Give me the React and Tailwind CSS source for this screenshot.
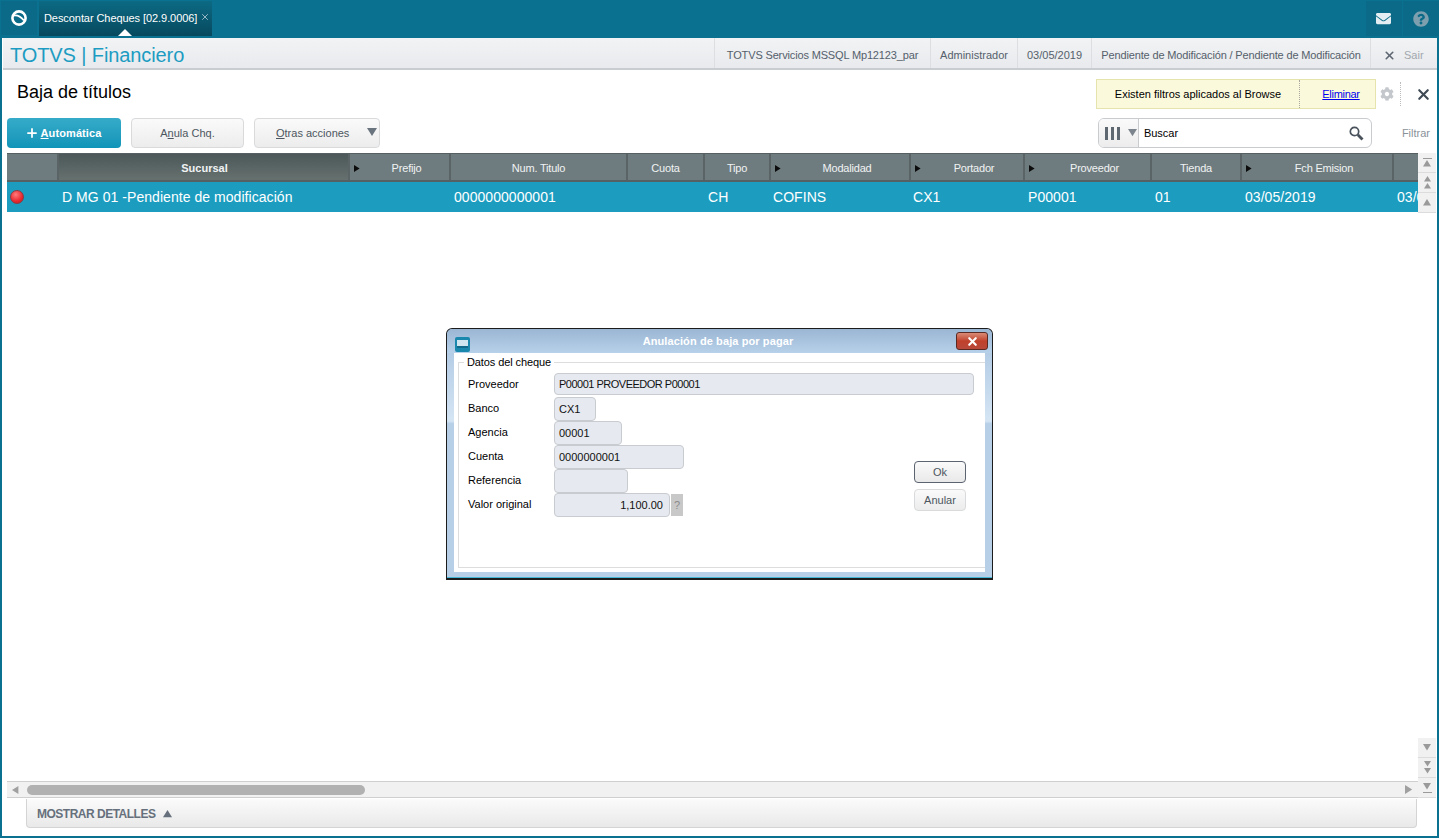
import { FaEnvelope, FaQuestionCircle, FaCog } from 'react-icons/fa'
import { X, Plus } from 'lucide-react'

const font = { fontFamily: '"Liberation Sans", Arial, sans-serif' }

const columns = [
  { label: '', w: 'w-[52px]' },
  { label: 'Sucursal', w: 'w-[291px]', active: true },
  { label: 'Prefijo', w: 'w-[101px]', arrow: true },
  { label: 'Num. Titulo', w: 'w-[177px]' },
  { label: 'Cuota', w: 'w-[77px]' },
  { label: 'Tipo', w: 'w-[66px]' },
  { label: 'Modalidad', w: 'w-[140px]', arrow: true },
  { label: 'Portador', w: 'w-[114px]', arrow: true },
  { label: 'Proveedor', w: 'w-[127px]', arrow: true },
  { label: 'Tienda', w: 'w-[90px]' },
  { label: 'Fch Emision', w: 'w-[152px]', arrow: true },
  { label: '', w: 'flex-1' },
]

const cells = [
  { w: 'w-[392px]', text: 'D MG 01 -Pendiente de modificación' },
  { w: 'w-[254px]', text: '0000000000001' },
  { w: 'w-[65px]', text: 'CH' },
  { w: 'w-[140px]', text: 'COFINS' },
  { w: 'w-[115px]', text: 'CX1' },
  { w: 'w-[127px]', text: 'P00001' },
  { w: 'w-[90px]', text: '01' },
  { w: 'w-[152px]', text: '03/05/2019' },
]

function Tri({ dir = 'up', size = 9, color = '#9a9a9a' }) {
  const pts = { up: '0,8 5,0 10,8', down: '0,0 10,0 5,8', left: '8,0 8,10 0,5', right: '0,0 8,5 0,10' }
  return (
    <svg width={size} height={size} viewBox="0 0 10 10" className="block">
      <polygon points={pts[dir]} fill={color} />
    </svg>
  )
}

function ScrollBtn({ children }) {
  return (
    <div className="h-[20px] w-[18px] shrink-0 flex flex-col items-center justify-center bg-[#f1f1f1] border-b border-[#dcdcdc]">
      {children}
    </div>
  )
}

function Logo() {
  return (
    <svg width="18" height="18" viewBox="0 0 18 18">
      <circle cx="9" cy="9" r="6.6" fill="none" stroke="#fff" strokeWidth="2.6" />
      <path d="M4 6.5 C7 6 11 8 14 11.5" fill="none" stroke="#fff" strokeWidth="1.8" />
    </svg>
  )
}

function SearchIcon() {
  return (
    <svg width="15" height="15" viewBox="0 0 15 15" className="self-center mr-[7px]">
      <circle cx="5.5" cy="5.5" r="4.2" fill="none" stroke="#4a535c" strokeWidth="1.7" />
      <path d="M8.8 8.8 L13.5 13.5" stroke="#4a535c" strokeWidth="2.8" />
    </svg>
  )
}

function Field({ label, value, w, right, extra }) {
  return (
    <div className="flex items-center h-6">
      <span className="w-[86px] pb-px text-black">{label}</span>
      <div className={`${w} h-6 bg-[#e6e9f0] border border-[#c8cbcf] rounded px-1 flex items-center text-[#111] ${right ? 'justify-end pr-1.5' : ''}`}>
        {value}
      </div>
      {extra}
    </div>
  )
}

export default function App() {
  return (
    <div style={font} className="relative w-[1439px] h-[838px] overflow-hidden flex flex-col bg-white text-[11px]">
      {/* Top bar */}
      <div className="h-[38px] shrink-0 bg-[#0b7190] flex items-start pt-px pl-px">
        <div className="w-[36px] h-[34px] bg-[#0a6a87] flex items-center justify-center"><Logo /></div>
        <div className="relative ml-0.5 w-[173px] h-[35px] bg-gradient-to-b from-[#0c6a84] to-[#07495e] flex items-center pl-[5px] text-white whitespace-nowrap">
          <span className="tracking-[-0.07px]">Descontar Cheques [02.9.0006]</span>
          <X size={10} strokeWidth={2} className="ml-[3px] mb-1 text-[#b4cdd6]" />
          <div className="absolute bottom-0 left-[79px] w-0 h-0 border-x-[7px] border-x-transparent border-b-[7px] border-b-white" />
        </div>
        <div className="ml-auto flex h-[35px] gap-[1px]">
          <div className="w-[36px] bg-[#0a6a87] flex items-center justify-center"><FaEnvelope size={15} className="mr-0.5 text-[#e4eef2]" /></div>
          <div className="w-[36px] bg-[#0a6a87] flex items-center justify-center"><FaQuestionCircle size={16} className="text-[#7d9fae]" /></div>
        </div>
      </div>

      <div className="flex-1 min-h-0 flex flex-col border-x-2 border-b-2 border-[#0b7190]">
        {/* App header */}
        <div className="ml-px h-[32px] shrink-0 bg-gradient-to-b from-[#f1f3f5] to-[#e8eaed] border-b-2 border-[#c9cdd1] flex items-center text-[#55606b] whitespace-nowrap">
          <span className="pl-[7px] pt-1 text-[20px] tracking-[-0.1px] text-[#1c9cc2]">TOTVS | Financiero</span>
          <div className="ml-auto flex items-center h-full">
            <div className="w-[216px] h-full flex items-center justify-center pt-1 tracking-[-0.15px] border-l border-[#dcdee1]">TOTVS Servicios MSSQL Mp12123_par</div>
            <div className="w-[87px] h-full flex items-center justify-center pt-1 border-l border-[#dcdee1]">Administrador</div>
            <div className="w-[74px] h-full flex items-center justify-center pt-1 border-l border-[#dcdee1]">03/05/2019</div>
            <div className="w-[279px] h-full flex items-center justify-center pt-1 tracking-[-0.15px] border-l border-[#dcdee1]">Pendiente de Modificación / Pendiente de Modificación</div>
            <div className="w-[67px] h-full flex items-center pl-[12px] pt-1 border-l border-[#dcdee1]">
              <X size={13} strokeWidth={3} className="text-[#5d6670]" />
              <span className="ml-2 text-[#a2a8ae]">Sair</span>
            </div>
          </div>
        </div>

        {/* Title row */}
        <div className="h-[48px] shrink-0 flex items-start pt-[9px] pl-[15px]">
          <h1 className="text-[18px] leading-[22px] pt-0.5 text-black">Baja de títulos</h1>
          <div className="ml-auto flex items-center h-[30px]">
            <div className="w-[280px] h-[30px] bg-[#fbf9dc] border border-[#e5e3ae] flex items-center text-black">
              <div className="w-[202px] text-center">Existen filtros aplicados al Browse</div>
              <div className="flex-1 h-full flex items-center justify-center pl-[7px] border-l border-dotted border-[#a9a9a0]">
                <a className="text-[#0000ee] underline tracking-[-0.3px]">Eliminar</a>
              </div>
            </div>
            <FaCog size={14} className="ml-[4px] text-[#c4c8cc]" />
            <div className="ml-[6px] h-[24px] border-l border-dotted border-[#bcbcbc]" />
            <X size={17} strokeWidth={3} className="ml-[14px] mr-[5px] text-[#3f4a55]" />
          </div>
        </div>

        {/* Toolbar */}
        <div className="h-[35px] shrink-0 flex items-start pl-[5px] pr-[7px]">
          <button className="w-[114px] h-[30px] pr-[2px] rounded bg-gradient-to-b from-[#35abc9] to-[#0e94b8] text-white font-bold flex items-center justify-center">
            <Plus size={14} strokeWidth={3} className="mr-[2px]" />
            <span className="tracking-[0.1px]"><u>A</u>utomática</span>
          </button>
          <button className="ml-[10px] w-[113px] h-[30px] rounded border border-[#d8dadc] bg-gradient-to-b from-[#fafafa] to-[#ececec] text-[#4c5660]">
            A<u>n</u>ula Chq.
          </button>
          <button className="ml-[10px] w-[126px] h-[30px] rounded border border-[#d8dadc] bg-gradient-to-b from-[#fafafa] to-[#ececec] text-[#4c5660] flex items-center pl-[21px]">
            <span><u>O</u>tras acciones</span>
            <span className="ml-auto mr-[2px]"><Tri dir="down" size={10} color="#6a747e" /></span>
          </button>
          <div className="ml-auto flex items-center">
            <div className="w-[274px] h-[30px] rounded-md border border-[#c9cccf] flex overflow-hidden">
              <div className="w-[40px] h-full border-r border-[#c9cccf] bg-gradient-to-b from-[#fafafa] to-[#ececec] flex items-center pl-[6px] gap-[3px]">
                <div className="w-[3px] h-[13px] bg-[#5e6871]" />
                <div className="w-[3px] h-[13px] bg-[#5e6871]" />
                <div className="w-[3px] h-[13px] bg-[#5e6871]" />
                <span className="ml-[5px]"><Tri dir="down" size={9} color="#7c858d" /></span>
              </div>
              <div className="flex-1 flex items-center pl-[5px] text-black">Buscar</div>
              <SearchIcon />
            </div>
            <span className="ml-[30px] text-[#8a929a]">Filtrar</span>
          </div>
        </div>

        <div className="flex-1 min-h-0 flex pl-[5px] pr-px">
          <div className="flex-1 min-w-0 flex flex-col">
            {/* Browse grid */}
            <div className="h-[29px] shrink-0 flex bg-[#6f7c7f] border-t border-[#565f62] border-b-2 border-b-[#565f62] text-[#f0f3f4] tracking-[-0.2px]">
              {columns.map((c, i) => (
                <div key={i} className={`${c.w} shrink-0 relative h-full flex items-center justify-center pt-0.5 border-r-2 border-[#5a6467] last:border-r-0 last:shrink ${c.arrow ? 'pl-[14px]' : ''} ${c.active ? 'bg-gradient-to-b from-[#4c5859] to-[#66716f] font-bold tracking-normal pl-0.5' : ''}`}>
                  {c.arrow && <span className="absolute left-[4px] top-[11px]"><Tri dir="right" size={7} color="#0c0c0c" /></span>}
                  {c.label}
                </div>
              ))}
            </div>
            <div className="h-[30px] shrink-0 bg-[#1c9dbf] flex items-center text-white text-[14px] tracking-[0.05px] overflow-hidden whitespace-nowrap">
              <div className="w-[55px] shrink-0 h-full flex items-center pl-[3px]">
                <div className="w-[14px] h-[14px] rounded-full border border-[#8a3b42] bg-[radial-gradient(circle_at_40%_30%,#ff7a7a,#e8282f_60%,#b31d25)]" />
              </div>
              {cells.map((c, i) => (
                <div key={i} className={`${c.w} shrink-0`}>{c.text}</div>
              ))}
              <div className="shrink-0">03/05/2019</div>
            </div>
            <div className="flex-1" />

            {/* Horizontal scrollbar */}
            <div className="h-[17px] shrink-0 bg-[#f1f1f1] border-y border-[#cfcfcf] flex items-center pl-[5px] pr-[4px]">
              <Tri dir="left" size={8} color="#a0a0a0" />
              <div className="ml-[7px] w-[338px] h-[10px] rounded-full bg-[#b1b1b1]" />
              <span className="ml-auto"><Tri dir="right" size={9} color="#a0a0a0" /></span>
            </div>
          </div>
          {/* Vertical scrollbar */}
          <div className="w-[18px] shrink-0 flex flex-col">
            <ScrollBtn><div className="w-[9px] h-px mb-[1px] bg-[#9a9a9a]" /><Tri dir="up" size={8} /></ScrollBtn>
            <ScrollBtn><Tri dir="up" size={7} /><Tri dir="up" size={7} /></ScrollBtn>
            <ScrollBtn><Tri dir="up" size={8} /></ScrollBtn>
            <div className="flex-1" />
            <ScrollBtn><Tri dir="down" size={8} /></ScrollBtn>
            <ScrollBtn><Tri dir="down" size={7} /><Tri dir="down" size={7} /></ScrollBtn>
            <ScrollBtn><Tri dir="down" size={8} /><div className="w-[9px] h-px mt-[1px] bg-[#9a9a9a]" /></ScrollBtn>
          </div>
        </div>

        {/* Details bar */}
        <div className="mt-px mb-[8px] ml-[24px] mr-[20px] h-[29px] shrink-0 rounded-b border border-t-0 border-[#d4d4d4] bg-gradient-to-b from-[#fbfbfb] to-[#e9e9e9] flex items-center pl-[10px] pt-0.5 text-[#66707c] text-[12px] tracking-[-0.5px] font-bold">
          MOSTRAR DETALLES
          <span className="ml-[8px]"><Tri dir="up" size={9} color="#66707c" /></span>
        </div>
      </div>

      {/* Modal */}
      <div className="absolute left-[446px] top-[328px] w-[547px] h-[252px] flex flex-col rounded-t-md border border-[#1c1c1c] border-b-2 bg-[linear-gradient(180deg,#a8c4e0_0%,#d5e5f4_37%,#b7d0e8_38%)]">
        <div className="relative h-[24px] shrink-0 rounded-t-md bg-gradient-to-b from-[#9bb6d3] to-[#b7d1ea] flex items-center justify-center text-white font-bold tracking-[0.1px] pr-[3px]">
          Anulación de baja por pagar
          <div className="absolute left-[8px] top-[8px] w-[15px] h-[15px] rounded-[2px] bg-[#1a87ad] flex items-center justify-center">
            <div className="w-[11px] h-[8px] mb-px bg-[#cfe6f1] border-b-2 border-[#0f6a8c]" />
          </div>
          <div className="absolute right-[4px] top-[3px] w-[32px] h-[18px] rounded-[3px] border border-[#5a2a22] bg-gradient-to-b from-[#d98a76] via-[#c0412c] to-[#b8483a] flex items-center justify-center">
            <X size={13} strokeWidth={4} className="text-white" />
          </div>
        </div>
        <div className="mx-[7px] h-[219px] shrink-0 bg-white pl-[4px] pt-[3px]">
          <fieldset className="h-[212px] border border-r-0 border-[#dddddd] pl-[9px] pr-[11px]">
            <legend className="-ml-[4px] px-[3px] leading-[12px] text-black tracking-[-0.1px]">Datos del cheque</legend>
            <div className="pt-[5px]">
              <div className="flex items-center h-[22px] mb-[2px]">
                <span className="w-[86px] text-black">Proveedor</span>
                <div className="flex-1 h-[22px] bg-[#e6e9f0] border border-[#c8cbcf] rounded px-1 flex items-center text-[#111] tracking-[-0.5px]">P00001 PROVEEDOR P00001</div>
              </div>
              <div className="flex">
                <div className="flex flex-col flex-1">
                  <Field label="Banco" value="CX1" w="w-[42px]" />
                  <Field label="Agencia" value="00001" w="w-[68px]" />
                  <Field label="Cuenta" value="0000000001" w="w-[130px]" />
                  <Field label="Referencia" value="" w="w-[74px]" />
                  <Field
                    label="Valor original"
                    value="1,100.00"
                    w="w-[116px]"
                    right
                    extra={<div className="ml-px w-3 h-[22px] bg-[#c8c8c8] text-[#8b8b8b] flex items-center justify-center">?</div>}
                  />
                </div>
                <div className="w-[52px] mr-[8px] pt-[64px] flex flex-col gap-[6px]">
                  <button className="h-[22px] rounded border border-[#5b6470] bg-gradient-to-b from-[#fafafa] to-[#e9e9e9] text-[#4c5660]">Ok</button>
                  <button className="h-[22px] rounded border border-[#d8dadc] bg-gradient-to-b from-[#fafafa] to-[#ececec] text-[#4c5660]">Anular</button>
                </div>
              </div>
            </div>
          </fieldset>
        </div>
        <div className="flex-1" />
        <div className="h-px shrink-0 bg-[#45b6d6]" />
      </div>
    </div>
  )
}
